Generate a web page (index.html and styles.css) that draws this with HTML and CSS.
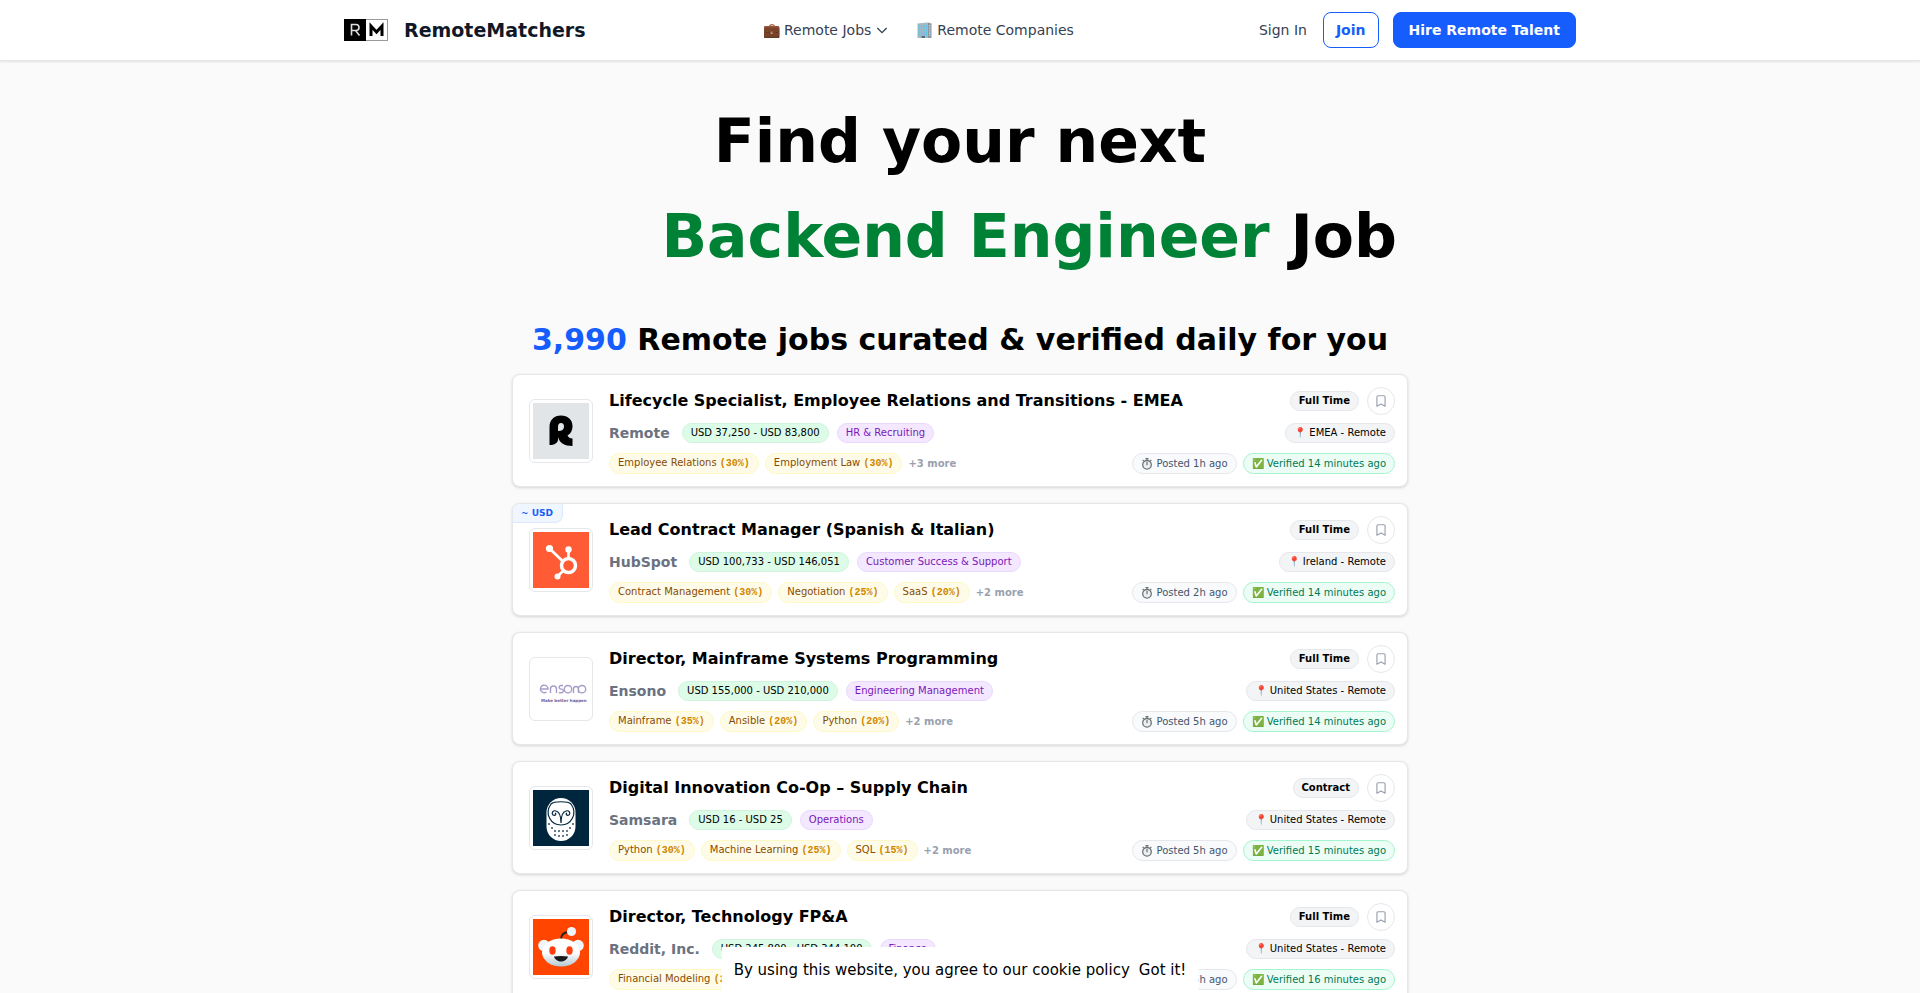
FILE: index.html
```html
<!DOCTYPE html>
<html lang="en">

<head>
	<meta charset="UTF-8">
	<meta name="viewport" content="width=device-width, initial-scale=1.0">
	<title>RemoteMatchers</title>
	<link rel="stylesheet" href="styles.css">
</head>

<body>
	<svg class="sprite" aria-hidden="true">
		<symbol id="bookmark" viewBox="0 0 24 24">
			<path d="M5 5a2 2 0 0 1 2-2h10a2 2 0 0 1 2 2v16l-7-4-7 4z" fill="none" stroke="currentColor" stroke-width="2" stroke-linejoin="round" />
		</symbol>
		<symbol id="stopwatch" viewBox="0 0 12 12">
			<path d="M4.500 .7h3M6 .7v1.500M1.700 2l1 1M10.300 2l-1 1" fill="none" stroke="#6b7274" stroke-width="1.200" />
			<circle cx="6" cy="6.800" r="4.300" fill="#eceff1" stroke="#6b7274" stroke-width="1.300" />
			<path d="M6 7.200V4" stroke="#555" stroke-width="1" />
		</symbol>
	</svg>

	<header class="header">
		<div class="header-inner">
			<a class="brand" href="#">
				<svg class="brand-logo" viewBox="0 0 44 22" aria-hidden="true">
					<rect width="44" height="22" fill="#999" />
					<rect width="22" height="22" fill="#000" />
					<rect x="22" y="1" width="21" height="20" fill="#fff" />
					<path d="M7.500 16.500V5.500h4.500a3 3 0 0 1 0 6H7.500M11.500 11.500l4 5" fill="none" stroke="#ddd" stroke-width="1.600" />
					<path d="M27 17V7l5.500 6L38 7v10" fill="none" stroke="#000" stroke-width="3" />
				</svg>
				<span>RemoteMatchers</span>
			</a>
			<nav class="nav">
				<button class="nav-item nav-jobs" type="button">💼 Remote Jobs
					<svg class="chevron" viewBox="0 0 24 24" aria-hidden="true"><path d="M5 9l7 7 7-7" /></svg>
				</button>
				<a class="nav-item" href="#">
					<svg class="building" viewBox="0 0 16 16" aria-hidden="true">
						<path d="M1 1.500L11.500 .5V16H1z" fill="#a9b8c0" />
						<path d="M11.500 .5L15 1.500V16h-3.500z" fill="#8a979e" />
						<path d="M2.500 3v11M5 3v11M7.500 3v11M10 3v11" stroke="#5cc4ef" stroke-width="1.500" stroke-dasharray="1.700 .7" />
						<path d="M13.300 3v11" stroke="#b9dcec" stroke-width="1.200" stroke-dasharray="1.700 .7" />
						<path d="M5 14h3.500v2H5z" fill="#54707e" />
					</svg>
					Remote Companies
				</a>
			</nav>
			<div class="actions">
				<a class="signin" href="#">Sign In</a>
				<a class="btn btn-join" href="#">Join</a>
				<a class="btn btn-hire" href="#">Hire Remote Talent</a>
			</div>
		</div>
	</header>

	<main class="container">
		<h1 class="hero">
			<span class="hero-top">Find your next</span>
			<span class="hero-role"><span class="role">Backend Engineer</span> Job</span>
		</h1>
		<h2 class="subtitle"><span class="count">3,990</span> Remote jobs curated &amp; verified daily for you</h2>

		<div class="jobs">
			<article class="card">
				<div class="logo">
					<svg viewBox="0 0 56 56" aria-hidden="true">
						<rect width="56" height="56" fill="#e2e5e8" />
						<path d="M16.500 42V24c0-7 4.500-11.500 11.500-11.500s11.500 4.500 11.500 10.500c0 4.500-2 8-5 9.500 1 2 2.500 3 5 3V43c-8 0-13-3-14.500-9v2.500c0 3.500-3.500 5.500-8.500 5.500zM25 28c4 0 6-1.500 6-4.500 0-2-1-3.500-3-3.500s-3 1.500-3 4z" />
					</svg>
				</div>
				<div class="body">
					<div class="row row-top">
						<h3 class="title"><a href="#">Lifecycle Specialist, Employee Relations and Transitions - EMEA</a></h3>
						<div class="side side-top">
							<span class="chip type">Full Time</span>
							<button class="save" type="button" aria-label="Save job"><svg aria-hidden="true"><use href="#bookmark" /></svg></button>
						</div>
					</div>
					<div class="row row-mid">
						<div class="company"><span class="name">Remote</span> <span class="chip salary">USD 37,250 - USD 83,800</span> <span class="chip category">HR &amp; Recruiting</span></div>
						<div class="side"><span class="chip place">📍 EMEA - Remote</span></div>
					</div>
					<div class="row row-low">
						<div class="skills">
							<span class="chip skill">Employee Relations <b>(30%)</b></span>
							<span class="chip skill">Employment Law <b>(30%)</b></span>
							<span class="more">+3 more</span>
						</div>
						<div class="side">
							<span class="chip posted"><svg aria-hidden="true"><use href="#stopwatch" /></svg> Posted 1h ago</span>
							<span class="chip verified">✅ Verified 14 minutes ago</span>
						</div>
					</div>
				</div>
			</article>

			<article class="card">
				<span class="currency">~ USD</span>
				<div class="logo">
					<svg viewBox="0 0 56 56" aria-hidden="true">
						<rect width="56" height="56" fill="#ff5c35" />
						<g fill="none" stroke="#fff">
							<circle cx="35.500" cy="33.500" r="7" stroke-width="3.500" />
							<path d="M35.500 27V18M30 29.500L17 17M30.500 38.500L25 44" stroke-width="2.600" />
						</g>
						<g fill="#fff">
							<circle cx="16.500" cy="16.500" r="3.600" />
							<circle cx="35.500" cy="17.500" r="3.200" />
							<circle cx="24.500" cy="44.500" r="3" />
						</g>
					</svg>
				</div>
				<div class="body">
					<div class="row row-top">
						<h3 class="title"><a href="#">Lead Contract Manager (Spanish &amp; Italian)</a></h3>
						<div class="side side-top">
							<span class="chip type">Full Time</span>
							<button class="save" type="button" aria-label="Save job"><svg aria-hidden="true"><use href="#bookmark" /></svg></button>
						</div>
					</div>
					<div class="row row-mid">
						<div class="company"><span class="name">HubSpot</span> <span class="chip salary">USD 100,733 - USD 146,051</span> <span class="chip category">Customer Success &amp; Support</span></div>
						<div class="side"><span class="chip place">📍 Ireland - Remote</span></div>
					</div>
					<div class="row row-low">
						<div class="skills">
							<span class="chip skill">Contract Management <b>(30%)</b></span>
							<span class="chip skill">Negotiation <b>(25%)</b></span>
							<span class="chip skill">SaaS <b>(20%)</b></span>
							<span class="more">+2 more</span>
						</div>
						<div class="side">
							<span class="chip posted"><svg aria-hidden="true"><use href="#stopwatch" /></svg> Posted 2h ago</span>
							<span class="chip verified">✅ Verified 14 minutes ago</span>
						</div>
					</div>
				</div>
			</article>

			<article class="card">
				<div class="logo">
					<svg viewBox="0 0 56 56" aria-hidden="true">
						<g fill="none" stroke="#a89cc8" stroke-width="1.400">
							<path d="M7.500 28h7.500a3.800 3.800 0 1 0-1.500 3M17.500 32v-4a3 3 0 0 1 6 0v4M30 24.500h-2a1.800 1.800 0 0 0 0 3.600h.5a1.800 1.800 0 0 1 0 3.600h-2.500M40.500 32v-4a2.500 2.500 0 0 1 5 0v4" />
							<circle cx="35" cy="28.200" r="3.700" />
							<circle cx="49" cy="28.200" r="3.700" />
						</g>
						<text class="tagline" x="8" y="41" fill="#6a5a9c">Make better happen</text>
					</svg>
				</div>
				<div class="body">
					<div class="row row-top">
						<h3 class="title"><a href="#">Director, Mainframe Systems Programming</a></h3>
						<div class="side side-top">
							<span class="chip type">Full Time</span>
							<button class="save" type="button" aria-label="Save job"><svg aria-hidden="true"><use href="#bookmark" /></svg></button>
						</div>
					</div>
					<div class="row row-mid">
						<div class="company"><span class="name">Ensono</span> <span class="chip salary">USD 155,000 - USD 210,000</span> <span class="chip category">Engineering Management</span></div>
						<div class="side"><span class="chip place">📍 United States - Remote</span></div>
					</div>
					<div class="row row-low">
						<div class="skills">
							<span class="chip skill">Mainframe <b>(35%)</b></span>
							<span class="chip skill">Ansible <b>(20%)</b></span>
							<span class="chip skill">Python <b>(20%)</b></span>
							<span class="more">+2 more</span>
						</div>
						<div class="side">
							<span class="chip posted"><svg aria-hidden="true"><use href="#stopwatch" /></svg> Posted 5h ago</span>
							<span class="chip verified">✅ Verified 14 minutes ago</span>
						</div>
					</div>
				</div>
			</article>

			<article class="card">
				<div class="logo">
					<svg viewBox="0 0 56 56" aria-hidden="true">
						<rect width="56" height="56" fill="#00263e" />
						<rect x="13.500" y="8" width="29" height="43" rx="14.500" fill="#fff" />
						<g fill="none" stroke="#00263e" stroke-width="1.200">
							<path d="M18 14c-7 10 0 21 10 21s17-11 10-21c-3-3-17-3-20 0z" />
							<path d="M28 33c0-5-1-11-5-12-3-1-5 2-3 4 2 1 4-1 2-2M28 33c0-5 1-11 5-12 3-1 5 2 3 4-2 1-4-1-2-2" />
							<path d="M16 33v2M40 33v2M19 37v2M37 37v2M22 40v2M26 40v2M30 40v2M34 40v2M22 44v2M26 45v2M30 45v2M34 44v2" />
						</g>
					</svg>
				</div>
				<div class="body">
					<div class="row row-top">
						<h3 class="title"><a href="#">Digital Innovation Co-Op – Supply Chain</a></h3>
						<div class="side side-top">
							<span class="chip type">Contract</span>
							<button class="save" type="button" aria-label="Save job"><svg aria-hidden="true"><use href="#bookmark" /></svg></button>
						</div>
					</div>
					<div class="row row-mid">
						<div class="company"><span class="name">Samsara</span> <span class="chip salary">USD 16 - USD 25</span> <span class="chip category">Operations</span></div>
						<div class="side"><span class="chip place">📍 United States - Remote</span></div>
					</div>
					<div class="row row-low">
						<div class="skills">
							<span class="chip skill">Python <b>(30%)</b></span>
							<span class="chip skill">Machine Learning <b>(25%)</b></span>
							<span class="chip skill">SQL <b>(15%)</b></span>
							<span class="more">+2 more</span>
						</div>
						<div class="side">
							<span class="chip posted"><svg aria-hidden="true"><use href="#stopwatch" /></svg> Posted 5h ago</span>
							<span class="chip verified">✅ Verified 15 minutes ago</span>
						</div>
					</div>
				</div>
			</article>

			<article class="card">
				<div class="logo">
					<svg viewBox="0 0 56 56" aria-hidden="true">
						<defs>
							<linearGradient id="snoo" x1="0" y1="0" x2="0" y2="1">
								<stop offset=".5" stop-color="#fff" />
								<stop offset="1" stop-color="#b4c8d2" />
							</linearGradient>
						</defs>
						<rect width="56" height="56" fill="#ff4500" />
						<path d="M28 21c0-5 3-8 8-8" fill="none" stroke="#222" stroke-width="1.800" />
						<circle cx="38.500" cy="12.500" r="4.600" fill="#eef4f7" />
						<circle cx="11" cy="26.500" r="5.800" fill="#eef4f7" />
						<circle cx="45" cy="26.500" r="5.800" fill="#eef4f7" />
						<ellipse cx="28" cy="33.500" rx="19" ry="14" fill="url(#snoo)" />
						<ellipse cx="19.500" cy="31.500" rx="3.200" ry="4.200" fill="#ff3b10" />
						<ellipse cx="36.500" cy="31.500" rx="3.200" ry="4.200" fill="#ff3b10" />
						<path d="M21 37.500q7-1 14 0c-1 3.500-4 5-7 5s-6-1.500-7-5z" fill="#1a1a1a" />
					</svg>
				</div>
				<div class="body">
					<div class="row row-top">
						<h3 class="title"><a href="#">Director, Technology FP&amp;A</a></h3>
						<div class="side side-top">
							<span class="chip type">Full Time</span>
							<button class="save" type="button" aria-label="Save job"><svg aria-hidden="true"><use href="#bookmark" /></svg></button>
						</div>
					</div>
					<div class="row row-mid">
						<div class="company"><span class="name">Reddit, Inc.</span> <span class="chip salary">USD 245,800 - USD 344,100</span> <span class="chip category">Finance</span></div>
						<div class="side"><span class="chip place">📍 United States - Remote</span></div>
					</div>
					<div class="row row-low">
						<div class="skills">
							<span class="chip skill">Financial Modeling <b>(25%)</b></span>
						</div>
						<div class="side">
							<span class="chip posted"><svg aria-hidden="true"><use href="#stopwatch" /></svg> Posted 5h ago</span>
							<span class="chip verified">✅ Verified 16 minutes ago</span>
						</div>
					</div>
				</div>
			</article>
		</div>
	</main>

	<div class="cookie">
		<span>By using this website, you agree to our cookie policy</span>
		<button type="button">Got it!</button>
	</div>
</body>

</html>
```
FILE: styles.css
```css
* {
	margin: 0;
	padding: 0;
	box-sizing: border-box;
}

body {
	background-color: #fafafa;
	color: #000;
	font-family: "DejaVu Sans", sans-serif;
	font-size: 16px;
	line-height: 24px;
	overflow: hidden;
	height: 100vh;
}

a {
	color: inherit;
	text-decoration: none;
}

button {
	background: none;
	border: none;
	color: inherit;
	cursor: pointer;
	font: inherit;
}

.sprite {
	display: none;
}

/* header */

.header {
	background-color: #fff;
	border-bottom: 1px solid #e5e7eb;
	box-shadow: 0 1px 2px rgba(0, 0, 0, 0.1);
}

.header-inner {
	display: flex;
	align-items: center;
	justify-content: space-between;
	max-width: 1280px;
	height: 60px;
	margin: 0 auto;
	padding: 0 24px;
	font-size: 14px;
}

.brand {
	display: flex;
	align-items: center;
	gap: 16px;
	color: #101828;
	font-size: 19px;
	font-weight: bold;
}

.brand-logo {
	width: 44px;
	height: 22px;
}

.nav {
	display: flex;
	gap: 26px;
	padding-right: 8px;
	color: #364153;
}

.nav-item {
	display: flex;
	align-items: center;
	gap: 4px;
}

.nav-jobs {
	gap: 3px;
}

.building {
	width: 17px;
	height: 16px;
}

.chevron {
	width: 16px;
	height: 16px;
	fill: none;
	stroke: currentColor;
	stroke-width: 2;
}

.actions {
	display: flex;
	align-items: center;
	gap: 14px;
}

.signin {
	padding-right: 2px;
	color: #364153;
}

.btn {
	padding: 5px 12px;
	border: 1px solid #155dfc;
	border-radius: 8px;
	font-weight: bold;
}

.btn-join {
	background-color: #fff;
	color: #155dfc;
}

.btn-hire {
	padding: 5px 15px;
	background-color: #155dfc;
	color: #fff;
}

/* hero */

.container {
	max-width: 896px;
	margin: 0 auto;
}

.hero {
	padding: 33px 11px 0;
	font-size: 60px;
	line-height: 95px;
}

.hero-top,
.hero-role {
	display: block;
	text-align: center;
}

.hero-role {
	text-align: right;
}

.role {
	color: #008236;
}

.subtitle {
	padding: 38px 0 16px;
	font-size: 30px;
	line-height: 36px;
	text-align: center;
}

.count {
	color: #155dfc;
}

/* job cards */

.jobs {
	display: flex;
	flex-direction: column;
	gap: 16px;
}

.card {
	position: relative;
	display: flex;
	align-items: center;
	gap: 16px;
	padding: 12px 12px 12px 16px;
	background-color: #fff;
	border: 1px solid #e5e7eb;
	border-radius: 8px;
	box-shadow: 0 1px 3px rgba(0, 0, 0, 0.15);
}

.currency {
	position: absolute;
	top: 0;
	left: 0;
	padding: 0 9px 0 8px;
	background-color: #eff6ff;
	border: 1px solid #dbeafe;
	border-width: 0 1px 1px 0;
	border-radius: 8px 0;
	color: #155dfc;
	font-size: 9px;
	font-weight: bold;
	line-height: 18px;
}

.logo {
	display: flex;
	padding: 3px;
	border: 1px solid #e5e7eb;
	border-radius: 6px;
}

.logo svg {
	width: 56px;
	height: 56px;
}

.tagline {
	font-size: 4px;
	font-weight: bold;
}

.body {
	flex: 1;
	display: flex;
	flex-direction: column;
	gap: 8px;
}

.row {
	display: flex;
	align-items: center;
	justify-content: space-between;
}

.row-top {
	height: 28px;
}

.row-mid {
	height: 20px;
	margin-bottom: 2px;
}

.row-low {
	height: 21px;
}

.title {
	font-size: 16px;
	line-height: 24px;
}

.company,
.skills,
.side {
	display: flex;
	align-items: center;
	gap: 6px;
}

.company,
.side-top {
	gap: 8px;
}

.name {
	margin-right: 4px;
	color: #6b7280;
	font-size: 14px;
	font-weight: bold;
}

.chip {
	padding: 0 8px;
	border: 1px solid #e5e7eb;
	border-radius: 11px;
	background-color: #f3f4f6;
	font-size: 10px;
	line-height: 18px;
	white-space: nowrap;
}

.posted,
.verified {
	line-height: 19px;
}

.type {
	font-weight: bold;
}

.salary {
	background-color: #dcfce7;
	border-color: #d0f3e0;
}

.category {
	background-color: #f3e8ff;
	border-color: #e9d8fd;
	color: #7a17b8;
}

.skill {
	background-color: #fefce8;
	border-color: #fef9c2;
	color: #894b00;
}

.skill b {
	color: #d08700;
	font-family: "Liberation Mono", monospace;
}

.more {
	color: #99a1af;
	font-size: 10px;
	font-weight: bold;
}

.posted {
	display: flex;
	align-items: center;
	gap: 4px;
	background-color: #f8fafc;
	color: #45556c;
}

.posted svg {
	width: 12px;
	height: 12px;
}

.verified {
	background-color: #ecfdf5;
	border-color: #a4f4cf;
	color: #007a55;
}

.save {
	display: flex;
	align-items: center;
	justify-content: center;
	width: 28px;
	height: 28px;
	border: 1px solid #e5e7eb;
	border-radius: 50%;
	color: #99a1af;
}

.save svg {
	width: 14px;
	height: 14px;
}

/* cookie notice */

.cookie {
	position: fixed;
	bottom: 0;
	left: 50%;
	transform: translateX(-50%);
	display: flex;
	gap: 9px;
	padding: 11px 12px;
	background-color: #fff;
	font-size: 15px;
	white-space: nowrap;
}
```
